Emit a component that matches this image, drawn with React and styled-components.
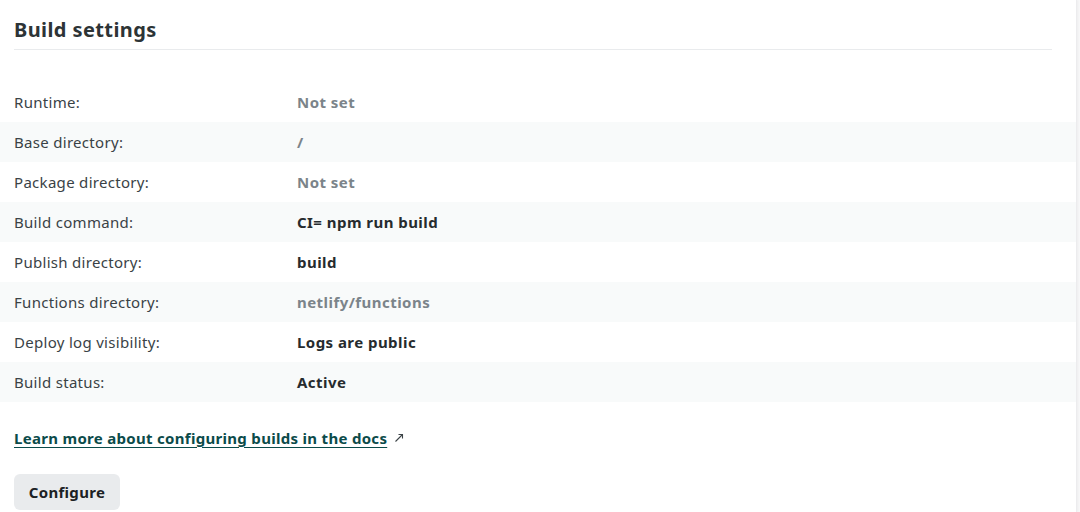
import React from 'react';
import styled, {createGlobalStyle} from 'styled-components';

const GlobalStyle = createGlobalStyle`
	html, body {
		margin: 0;
		padding: 0;
		background: #f7f7f8;
		font-family: 'Noto Sans', 'Open Sans', sans-serif;
	}
`;

const Page = styled.div`
	display: flex;
	height: 512px;
	overflow: hidden;
`;

const Card = styled.section`
	width: 1076px;
	background: #ffffff;
	border-right: 1px solid #ececee;
	box-shadow: 1px 0 2px rgba(0, 0, 0, 0.04);
`;

const Header = styled.div`
	margin: 0 24px 0 14px;
	padding-top: 15px;
	height: 34px;
	border-bottom: 1px solid #e9ebed;
`;

const Title = styled.h2`
	margin: 0;
	font-size: 20px;
	line-height: 30px;
	font-weight: 700;
	color: #2d3436;
	letter-spacing: 0.4px;
`;

const Table = styled.div`
	margin-top: 32px;
	display: flex;
	flex-direction: column;
`;

const Row = styled.div`
	display: grid;
	grid-template-columns: 283px 1fr;
	align-items: center;
	height: 40px;
	padding-left: 14px;
	background: ${p => (p.striped ? '#f8fafa' : 'transparent')};
`;

const Label = styled.span`
	font-size: 15px;
	color: #3a4246;
	letter-spacing: 0.3px;
`;

const Value = styled.span`
	font-size: 15px;
	font-weight: 700;
	letter-spacing: 0.45px;
	color: ${p => (p.muted ? '#7b848a' : '#262b2e')};
`;

const Footer = styled.div`
	padding: 24px 14px 0 14px;
	display: flex;
	flex-direction: column;
	align-items: flex-start;
	gap: 24px;
`;

const DocsLink = styled.a`
	font-size: 15px;
	font-weight: 700;
	color: #0b4b4a;
	text-decoration: none;
	display: flex;
	align-items: center;
	gap: 7px;
	line-height: 24px;
	letter-spacing: 0.3px;

	span {
		text-decoration: underline;
		text-underline-offset: 3px;
		text-decoration-thickness: 1px;
	}
`;

const Arrow = styled.svg`
	width: 10px;
	height: 10px;
	color: #3d4448;
`;

const Button = styled.button`
	font-family: inherit;
	font-size: 15px;
	font-weight: 700;
	letter-spacing: 0.3px;
	color: #1c2124;
	background: #e9ebed;
	border: none;
	border-radius: 6px;
	height: 36px;
	width: 106px;
	padding: 0;
	cursor: pointer;
`;

const settings = [
	{label: 'Runtime:', value: 'Not set', muted: true},
	{label: 'Base directory:', value: '/', muted: true},
	{label: 'Package directory:', value: 'Not set', muted: true},
	{label: 'Build command:', value: 'CI= npm run build'},
	{label: 'Publish directory:', value: 'build'},
	{label: 'Functions directory:', value: 'netlify/functions', muted: true},
	{label: 'Deploy log visibility:', value: 'Logs are public'},
	{label: 'Build status:', value: 'Active'},
];

export default function App() {
	return (
		<Page>
			<GlobalStyle/>
			<Card>
				<Header>
					<Title>Build settings</Title>
				</Header>
				<Table>
					{settings.map((s, i) => (
						<Row key={s.label} striped={i % 2 === 1}>
							<Label>{s.label}</Label>
							<Value muted={s.muted}>{s.value}</Value>
						</Row>
					))}
				</Table>
				<Footer>
					<DocsLink href="#">
						<span>Learn more about configuring builds in the docs</span>
						<Arrow viewBox="0 0 10 10" fill="none" stroke="currentColor" strokeWidth="1.1">
							<path d="M1.5 8.5 L8.5 1.5 M4.5 1.5 H8.5 V5.5"/>
						</Arrow>
					</DocsLink>
					<Button>Configure</Button>
				</Footer>
			</Card>
		</Page>
	);
}
